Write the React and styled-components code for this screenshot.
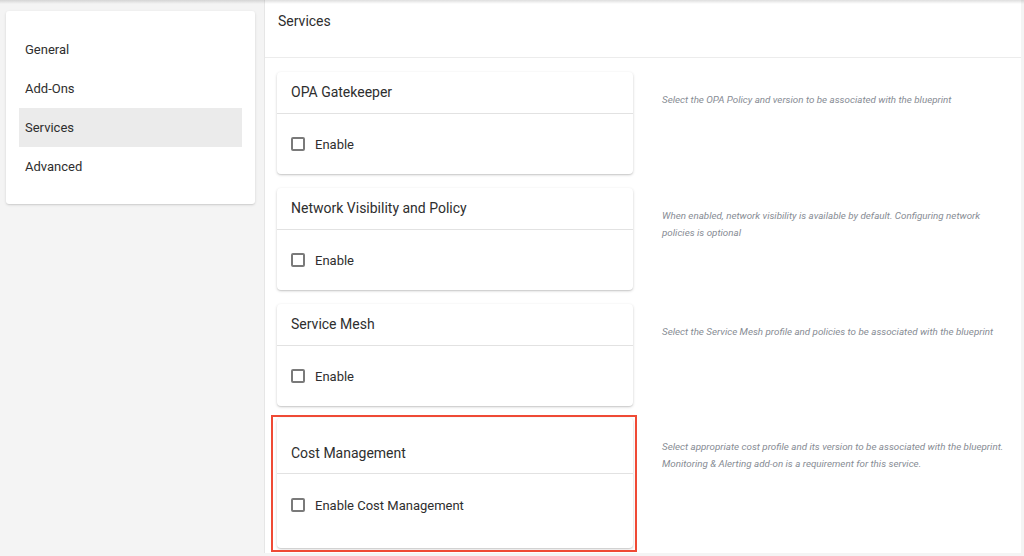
import React from "react";
import styled, { createGlobalStyle } from "styled-components";

const Global = createGlobalStyle`
  html, body { margin: 0; padding: 0; background: #f4f4f4; }
  body { font-family: Roboto, "Liberation Sans", Arial, sans-serif; color: #2e2e2e; -webkit-font-smoothing: antialiased; }
  * { box-sizing: border-box; }
`;

const Page = styled.div`
  position: relative;
  display: flex;
  align-items: flex-start;
  gap: 9px;
  padding-left: 6px;
  width: 1024px;
  height: 556px;
  overflow: hidden;
  &::before {
    content: "";
    position: absolute;
    left: 0; right: 0; top: 0;
    height: 4px;
    background: linear-gradient(to bottom, rgba(0,0,0,0.13), rgba(0,0,0,0));
    z-index: 5;
  }
`;

const Sidebar = styled.nav`
  margin-top: 11px;
  width: 249px;
  padding: 19px 13px 18px;
  background: #fff;
  border-radius: 3px;
  box-shadow: 0 1px 3px rgba(0,0,0,0.12), 0 1px 1px rgba(0,0,0,0.06);
  display: flex;
  flex-direction: column;
`;

const NavItem = styled.div`
  height: 39px;
  display: flex;
  align-items: center;
  padding-left: 6px;
  font-size: 13px;
  color: #2e2e2e;
  background: ${p => (p.$active ? "#ebebeb" : "transparent")};
`;

const Panel = styled.main`
  width: 757px;
  height: 553px;
  background: #fff;
  border-left: 1px solid #e6e6e6;
  display: flex;
  flex-direction: column;
`;

const PanelHeader = styled.header`
  height: 58px;
  padding: 13px 0 0 13px;
  font-size: 14px;
  color: #2e2e2e;
  border-bottom: 1px solid #ececec;
`;

const PanelBody = styled.div`
  padding: 14px 0 0 12px;
  display: flex;
  flex-direction: column;
`;

const Row = styled.section`
  display: flex;
  align-items: flex-start;
  gap: 29px;
  margin-bottom: ${p => p.$mb}px;
`;

const CardWrap = styled.div`
  position: relative;
  &::after {
    content: "";
    display: ${p => (p.$highlight ? "block" : "none")};
    position: absolute;
    top: -3px; left: -6px; right: -4px; bottom: -4px;
    border: 2px solid #ef4a35;
    pointer-events: none;
  }
`;

const Card = styled.div`
  width: 356px;
  background: #fff;
  border-radius: 4px;
  box-shadow: 0 1px 3px rgba(0,0,0,0.18), 0 1px 1px rgba(0,0,0,0.08);
`;

const CardHeader = styled.div`
  height: ${p => p.$h}px;
  padding: ${p => p.$pt}px 14px 0;
  font-size: 14px;
  color: #2e2e2e;
  border-bottom: 1px solid #e2e2e2;
`;

const CardBody = styled.div`
  height: ${p => p.$h}px;
  padding: ${p => p.$pt}px 14px 0;
`;

const CheckRow = styled.label`
  display: flex;
  align-items: center;
  gap: 10px;
  font-size: 13px;
  color: #2e2e2e;
  height: 20px;
`;

const Box = styled.span`
  width: 14px;
  height: 14px;
  border: 2px solid #7a7a7a;
  border-radius: 2px;
  display: inline-block;
`;

const Desc = styled.p`
  margin: ${p => p.$mt}px 0 0;
  width: 352px;
  font-size: 9.8px;
  line-height: 17px;
  font-style: italic;
  color: #878c94;
`;

const services = [
  { title: "OPA Gatekeeper", label: "Enable", desc: "Select the OPA Policy and version to be associated with the blueprint", mb: 14 },
  { title: "Network Visibility and Policy", label: "Enable", desc: "When enabled, network visibility is available by default. Configuring network policies is optional", mb: 14 },
  { title: "Service Mesh", label: "Enable", desc: "Select the Service Mesh profile and policies to be associated with the blueprint", mb: 12 },
  { title: "Cost Management", label: "Enable Cost Management", desc: "Select appropriate cost profile and its version to be associated with the blueprint. Monitoring & Alerting add-on is a requirement for this service.", mb: 0, highlight: true },
];

export default function App() {
  return (
    <>
      <Global />
      <Page>
        <Sidebar>
          {["General", "Add-Ons", "Services", "Advanced"].map(n => (
            <NavItem key={n} $active={n === "Services"}>{n}</NavItem>
          ))}
        </Sidebar>
        <Panel>
          <PanelHeader>Services</PanelHeader>
          <PanelBody>
            {services.map(s => (
              <Row key={s.title} $mb={s.mb}>
                <CardWrap $highlight={s.highlight}>
                  <Card>
                    <CardHeader $h={s.highlight ? 56 : 42} $pt={s.highlight ? 27 : 12}>{s.title}</CardHeader>
                    <CardBody $h={s.highlight ? 74 : 60} $pt={s.highlight ? 21 : 20}>
                      <CheckRow><Box />{s.label}</CheckRow>
                    </CardBody>
                  </Card>
                </CardWrap>
                <Desc $mt={s.highlight ? 20 : 19}>{s.desc}</Desc>
              </Row>
            ))}
          </PanelBody>
        </Panel>
      </Page>
    </>
  );
}
